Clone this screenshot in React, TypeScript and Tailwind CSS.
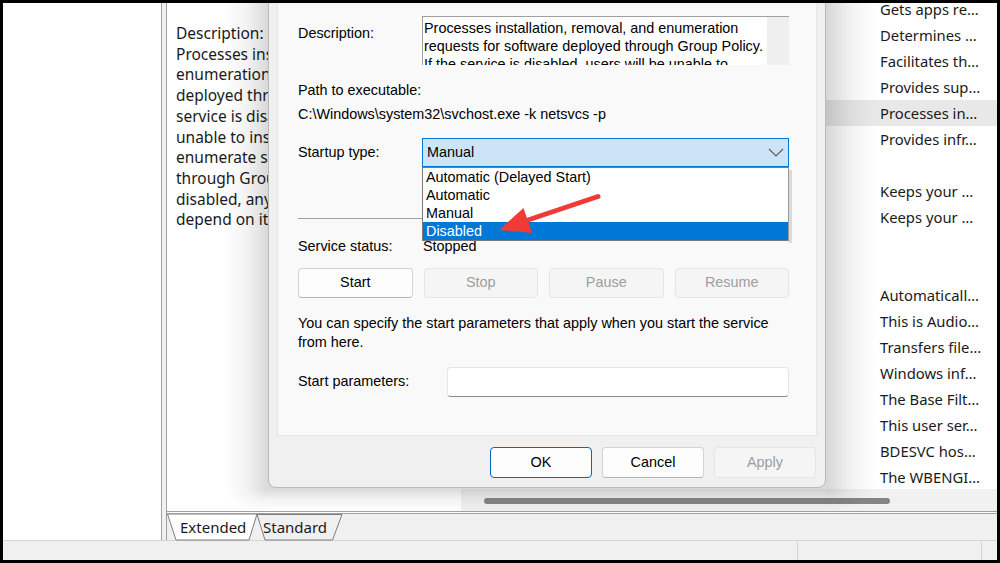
import React from "react";

const descLines = [
  "Description:",
  "Processes installation, removal, and",
  "enumeration requests for software",
  "deployed through Group Policy. If the",
  "service is disabled, users will be",
  "unable to install, remove, or",
  "enumerate software deployed",
  "through Group Policy. If this service is",
  "disabled, any services that explicitly",
  "depend on it will fail to start.",
];

const rows = [
  "Gets apps re…",
  "Determines …",
  "Facilitates th…",
  "Provides sup…",
  "Processes in…",
  "Provides infr…",
  "",
  "Keeps your …",
  "Keeps your …",
  "",
  "",
  "Automaticall…",
  "This is Audio…",
  "Transfers file…",
  "Windows inf…",
  "The Base Filt…",
  "This user ser…",
  "BDESVC hos…",
  "The WBENGI…",
];

function Chevron() {
  return (
    <svg width="16" height="9" viewBox="0 0 16 9" className="block">
      <polyline points="1,1 8,8 15,1" fill="none" stroke="#5f5f5f" strokeWidth="1.2" />
    </svg>
  );
}

export default function App() {
  return (
    <div className="w-[1000px] h-[563px] bg-black p-[3px] font-['Noto_Sans','Open_Sans',sans-serif] text-[#1a1a1a]">
      <div className="relative w-full h-full overflow-hidden bg-[#f0f0f0] flex flex-col">
        {/* main area */}
        <div className="flex h-[537px]">
          {/* left tree pane */}
          <div className="w-[159px] bg-white border-r border-[#a0a0a0]" />
          <div className="w-[4px] bg-[#f0f0f0]" />
          {/* right pane */}
          <div className="flex-1 flex flex-col border-l border-[#a0a0a0]">
            <div className="flex h-[508px]">
              {/* description pane */}
              <div className="w-[294px] bg-white overflow-hidden pt-[20px] pl-[9px] text-[15.5px] leading-[20.7px] whitespace-nowrap">
                {descLines.map((l, i) => (
                  <div key={i}>{l}</div>
                ))}
              </div>
              {/* list pane */}
              <div className="flex-1 flex flex-col bg-white">
                <div className="h-[486px] overflow-hidden">
                  <div className="-mt-[7px]">
                    {rows.map((r, i) => (
                      <div
                        key={i}
                        className={
                          "h-[26px] leading-[26px] pl-[419px] text-[14.8px] whitespace-nowrap " +
                          (i === 4 ? "bg-[#e8e8e8]" : "")
                        }
                      >
                        {r}
                      </div>
                    ))}
                  </div>
                </div>
                <div className="h-[22px] bg-[#f1f1f1] pt-[9px] pl-[23px]">
                  <div className="w-[406px] h-[6px] rounded-full bg-[#858585]" />
                </div>
              </div>
            </div>
            <div className="h-[3px] border-y border-[#a0a0a0] bg-white" />
            {/* tabs */}
            <div className="relative h-[26px] bg-[#f0f0f0]">
              <svg width="200" height="27" viewBox="0 0 200 27" className="absolute left-0 top-0">
                <polygon points="90,0.5 175,0.5 165.5,26 98,26" fill="#f0f0f0" stroke="#7d7d7d" strokeWidth="1" />
                <polygon points="0.5,0 90,0 82,26 9,26" fill="#ffffff" stroke="#7d7d7d" strokeWidth="1" />
              </svg>
              <span className="absolute left-[13px] top-0 leading-[26px] text-[15px]">Extended</span>
              <span className="absolute left-[96px] top-0 leading-[26px] text-[15px]">Standard</span>
            </div>
          </div>
        </div>
        {/* status bar */}
        <div className="h-[20px] border-t border-[#d5d5d5] flex bg-[#f0f0f0]">
          <div className="w-[795px] border-r border-[#d5d5d5]" />
          <div className="w-[184px] border-r border-[#d5d5d5]" />
          <div className="flex-1" />
        </div>

        {/* dialog drop shadow (soft gradients lying over the window behind) */}
        <div className="absolute z-[5] left-[221px] top-0 w-[44px] h-[485px] bg-linear-to-r from-transparent via-black/[0.045] to-black/[0.15]" />
        <div className="absolute z-[5] left-[823px] top-0 w-[50px] h-[485px] bg-linear-to-l from-transparent via-black/[0.05] to-black/[0.16]" />
        <div className="absolute z-[5] left-[265px] top-[477px] w-[558px] h-[32px] bg-linear-to-b from-black/[0.15] from-[25%] via-black/[0.05] via-[60%] to-transparent" />
        <div className="absolute z-[5] left-[221px] top-[485px] w-[44px] h-[24px] bg-[radial-gradient(ellipse_44px_24px_at_100%_0%,rgba(0,0,0,0.15),rgba(0,0,0,0.045)_50%,transparent_100%)]" />
        <div className="absolute z-[5] left-[823px] top-[485px] w-[50px] h-[24px] bg-[radial-gradient(ellipse_50px_24px_at_0%_0%,rgba(0,0,0,0.16),rgba(0,0,0,0.05)_50%,transparent_100%)]" />

        {/* Properties dialog */}
        <div className="absolute z-10 left-[265px] top-[-40px] w-[558px] h-[525px] bg-[#f0f0f0] border border-[#b9b9b9] rounded-b-[8px] flex flex-col px-[8px] font-['Liberation_Sans',Arial,sans-serif] text-[14.4px] text-black">
          <div className="flex-1 bg-[#f9f9f9] border border-[#e6e6e6] pt-[51px] pl-[20px] pr-[27px]">
            {/* description */}
            <div className="flex items-start h-[49px]">
              <div className="w-[124px] pt-[8px] leading-[18px]">Description:</div>
              <div className="flex-1 h-[49px] bg-white border-t border-l border-[#a0a0a0] flex overflow-hidden">
                <div className="flex-1 pl-[1px] pt-[2px] leading-[18px] whitespace-nowrap overflow-hidden">
                  <div>Processes installation, removal, and enumeration</div>
                  <div>requests for software deployed through Group Policy.</div>
                  <div>If the service is disabled, users will be unable to</div>
                </div>
                <div className="w-[22px] bg-[#efefef]" />
              </div>
            </div>
            <div className="mt-[16px] leading-[18px]">Path to executable:</div>
            <div className="mt-[6px] leading-[18px]">C:\Windows\system32\svchost.exe -k netsvcs -p</div>
            {/* startup type */}
            <div className="mt-[15px] flex items-center h-[29px]">
              <div className="w-[124px]">Startup type:</div>
              <div className="relative flex-1 h-[29px] border border-[#0078d4] bg-[#cce4f7] flex items-center pl-[4px] pr-[4px]">
                <span>Manual</span>
                <span className="ml-auto">
                  <Chevron />
                </span>
                <div className="absolute top-[28px] left-[-1px] right-[-1px] z-10 bg-white border border-[#7a7a7a] border-r-[#9a9a9a]">
                  <div className="h-[18px] leading-[18px] pl-[3px]">Automatic (Delayed Start)</div>
                  <div className="h-[18px] leading-[18px] pl-[3px]">Automatic</div>
                  <div className="h-[18px] leading-[18px] pl-[3px]">Manual</div>
                  <div className="h-[18px] leading-[18px] pl-[3px] bg-[#0078d7] text-white">Disabled</div>
                </div>
                <div className="absolute top-[31px] right-[-4px] w-[3px] h-[73px] bg-black/[0.12]" />
              </div>
            </div>
            <div className="mt-[51px] h-[1px] bg-[#a0a0a0]" />
            <div className="mt-[18px] flex leading-[18px]">
              <div className="w-[125px]">Service status:</div>
              <div>Stopped</div>
            </div>
            <div className="mt-[13px] grid grid-cols-4 gap-[11px] h-[30px]">
              <div className="flex items-center justify-center bg-[#fdfdfd] border border-[#d3d3d3] border-b-[#b5b5b5] rounded-[4px]">Start</div>
              <div className="flex items-center justify-center bg-[#f5f5f5] border border-[#e5e5e5] rounded-[4px] text-[#9d9d9d]">Stop</div>
              <div className="flex items-center justify-center bg-[#f5f5f5] border border-[#e5e5e5] rounded-[4px] text-[#9d9d9d]">Pause</div>
              <div className="flex items-center justify-center bg-[#f5f5f5] border border-[#e5e5e5] rounded-[4px] text-[#9d9d9d]">Resume</div>
            </div>
            <div className="mt-[15.5px] leading-[19px] whitespace-nowrap">
              <div>You can specify the start parameters that apply when you start the service</div>
              <div>from here.</div>
            </div>
            <div className="mt-[15.5px] flex items-center h-[30px]">
              <div className="w-[149px]">Start parameters:</div>
              <div className="flex-1 h-[30px] bg-white border border-[#e5e5e5] border-b-[#8a8a8a] rounded-[4px]" />
            </div>
          </div>
          {/* footer */}
          <div className="h-[51px] flex justify-end gap-[10px] pt-[11px] pr-[1px]">
            <div className="w-[102px] h-[31px] flex items-center justify-center bg-[#fdfdfd] border border-[#0067c0] rounded-[4px]">OK</div>
            <div className="w-[102px] h-[31px] flex items-center justify-center bg-[#fdfdfd] border border-[#d3d3d3] border-b-[#b5b5b5] rounded-[4px]">Cancel</div>
            <div className="w-[102px] h-[31px] flex items-center justify-center bg-[#f5f5f5] border border-[#e5e5e5] rounded-[4px] text-[#9d9d9d]">Apply</div>
          </div>
        </div>

        {/* red arrow annotation */}
        <svg width="110" height="46" viewBox="0 0 110 46" className="absolute left-[492px] top-[189px] z-20">
          <line x1="103" y1="4.5" x2="33" y2="28" stroke="#ef3b36" strokeWidth="5" strokeLinecap="round" />
          <polygon points="4,38 28.5,16 37,41" fill="#ef3b36" />
        </svg>
      </div>
    </div>
  );
}
